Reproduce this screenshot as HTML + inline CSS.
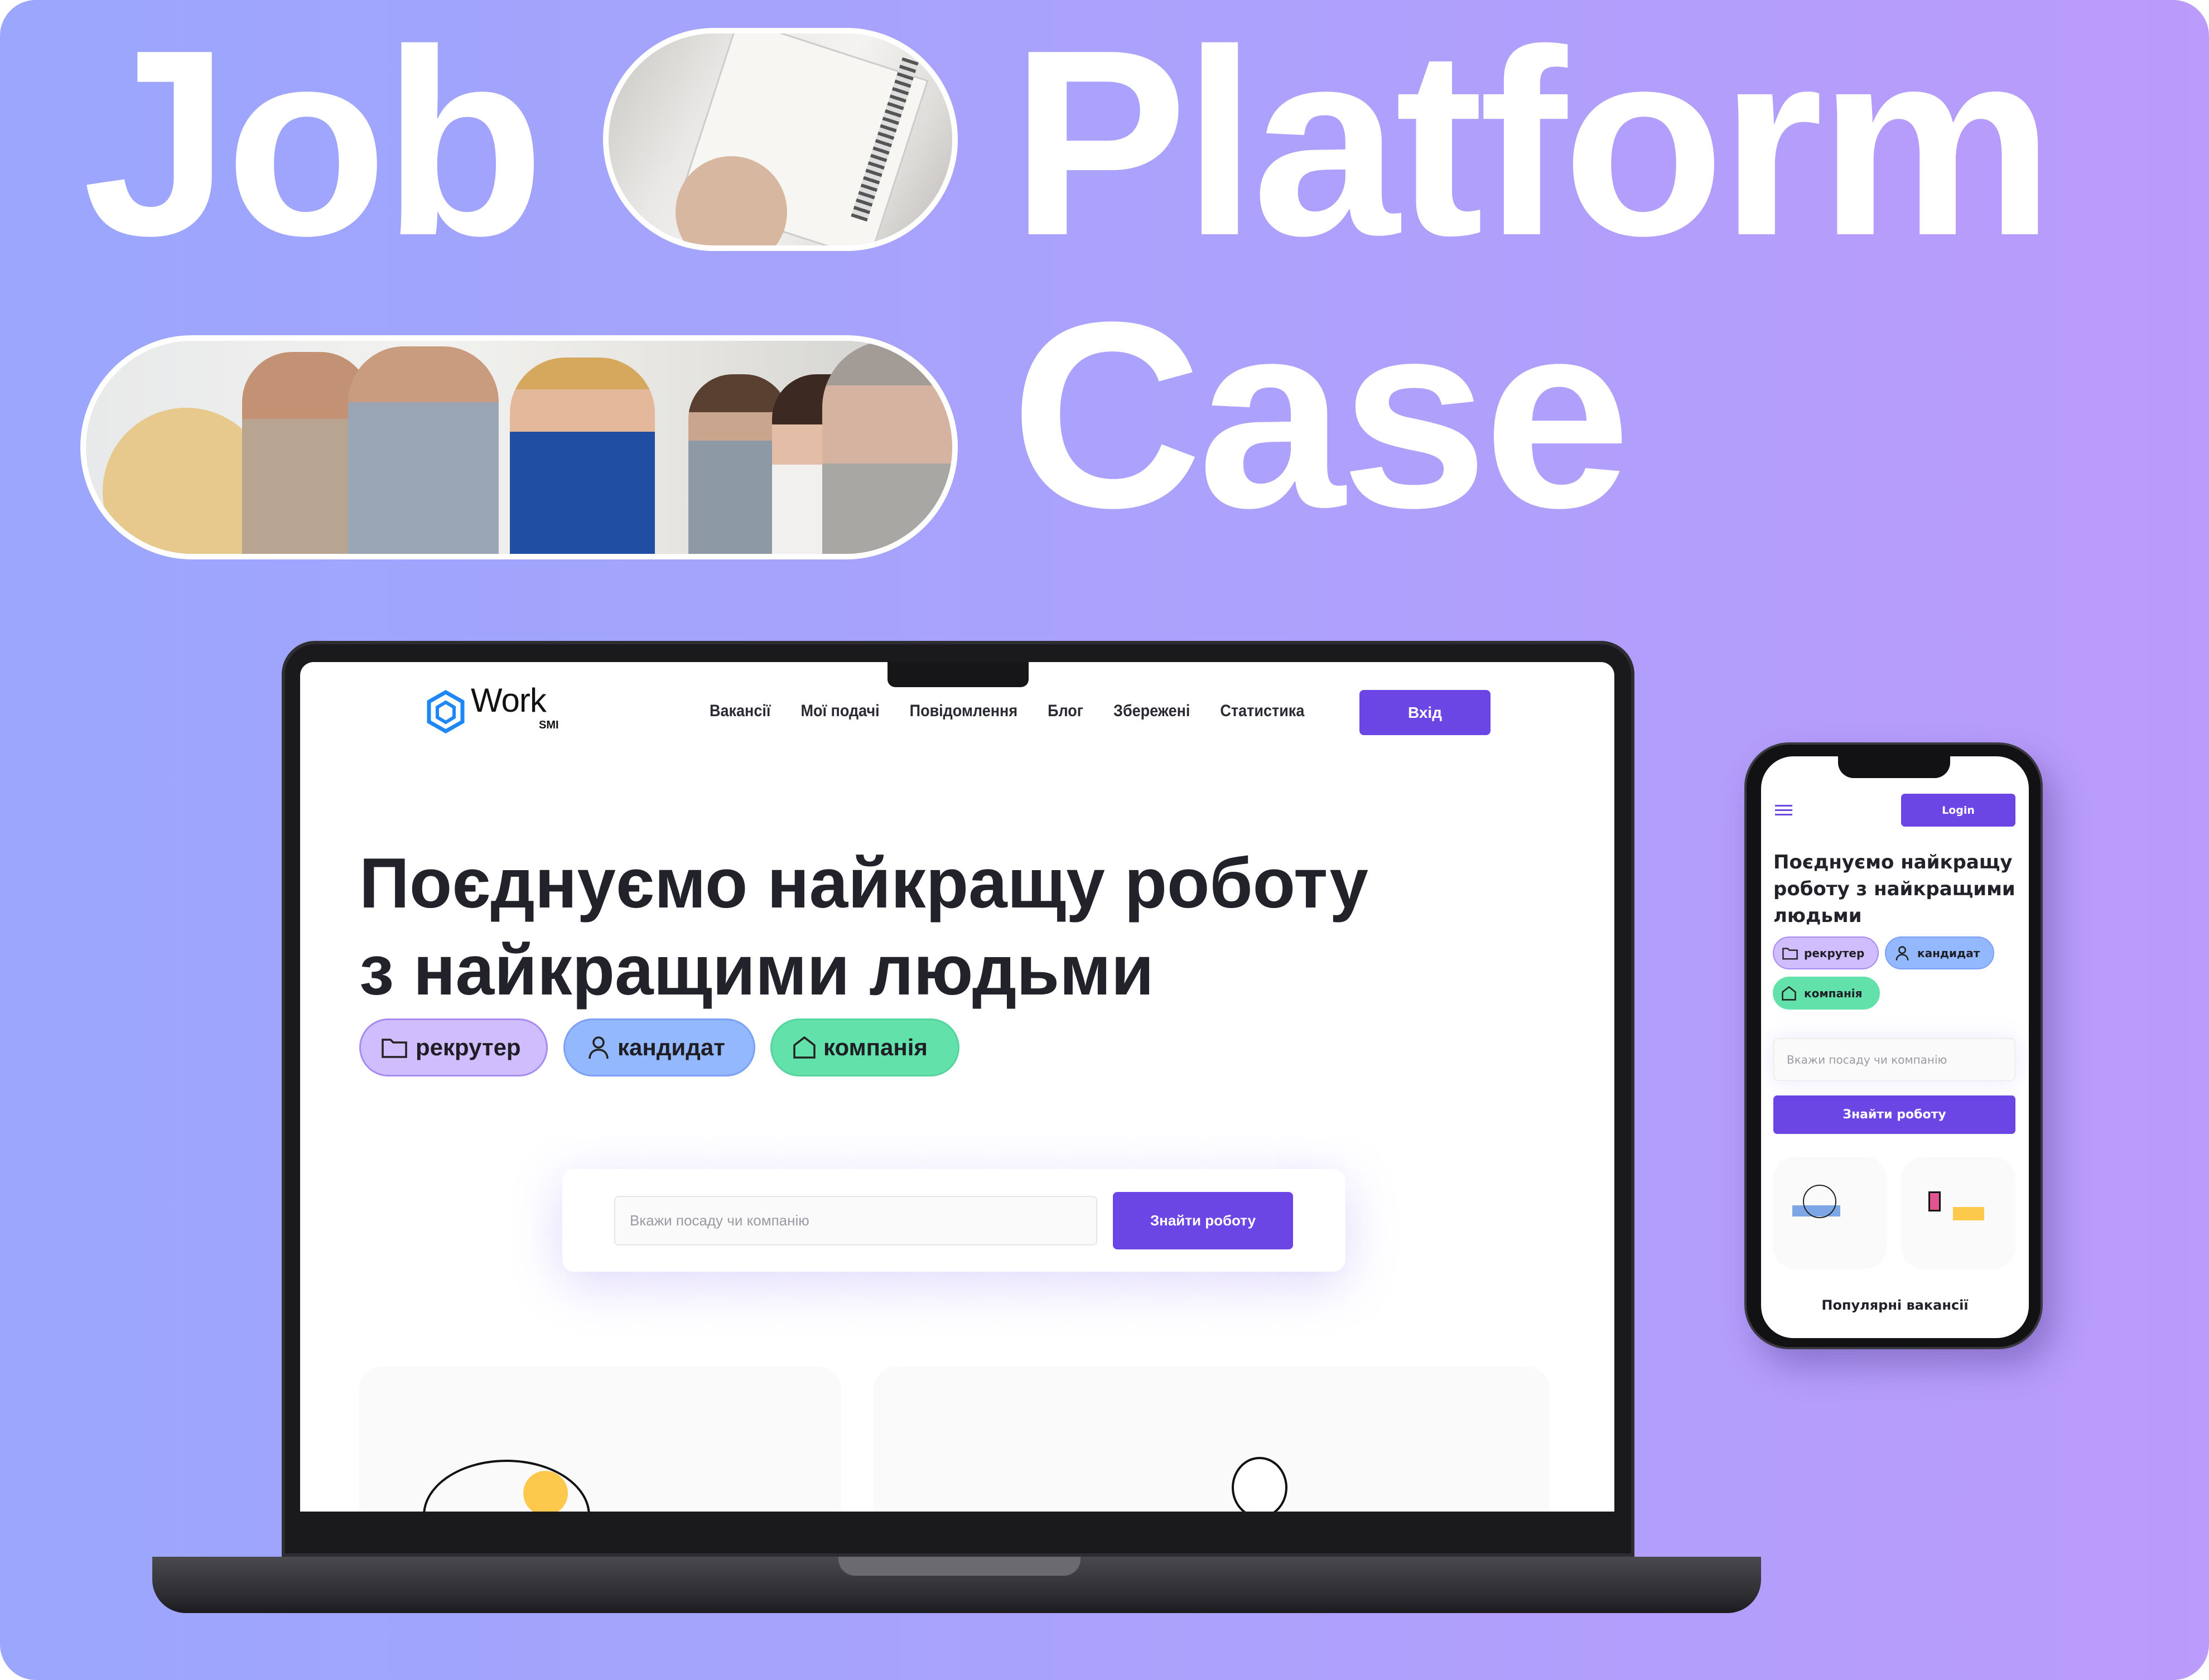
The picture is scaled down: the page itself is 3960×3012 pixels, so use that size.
<!DOCTYPE html>
<html><head><meta charset="utf-8"><style>
*{margin:0;padding:0;box-sizing:border-box}
body{width:3960px;height:3012px;overflow:hidden;background:#fff;font-family:"Liberation Sans","Noto Sans CJK SC",sans-serif}
#bg{position:absolute;left:0;top:0;width:3960px;height:3012px;border-radius:64px;background:linear-gradient(90deg,#9ba6fd 0%,#aaa2fc 50%,#bb9bfb 100%);overflow:hidden}
.abs{position:absolute}
.big{position:absolute;color:#fff;font-weight:bold;font-size:475px;line-height:1;letter-spacing:-8px}
.pill{position:absolute;border:10px solid #fff;border-radius:220px;overflow:hidden}
.chip{position:absolute;border-radius:60px;display:flex;align-items:center;font-weight:bold;color:#1e1e24}
</style></head><body><div id="bg">

<div class="big" style="left:148px;top:18px">Job</div>
<div class="big" style="left:1812px;top:18px">Platform</div>
<div class="big" style="left:1812px;top:506px">Case</div>

<div class="pill" style="left:1081px;top:50px;width:636px;height:400px;background:linear-gradient(120deg,#c9c7c3 0%,#e9e8e6 30%,#f4f3f1 55%,#dedcd9 80%,#bdbab6 100%)">
  <div class="abs" style="left:170px;top:20px;width:360px;height:340px;background:#f7f6f3;transform:rotate(18deg);border:3px solid #ccc"></div>
  <div class="abs" style="left:480px;top:40px;width:30px;height:300px;background:repeating-linear-gradient(0deg,#555 0 6px,#ddd 6px 14px);transform:rotate(18deg)"></div>
  <div class="abs" style="left:120px;top:220px;width:200px;height:200px;border-radius:50%;background:#d8b7a0"></div>
</div>

<div class="pill" style="left:144px;top:601px;width:1573px;height:402px;background:linear-gradient(90deg,#e8e9ea 0%,#f2f2f0 40%,#e5e4e0 70%,#cfcfcd 100%)">
  <div class="abs" style="left:30px;top:120px;width:300px;height:300px;border-radius:50%;background:#e7c98e"></div>
  <div class="abs" style="left:280px;top:20px;width:230px;height:400px;border-radius:90px 90px 0 0;background:linear-gradient(#c39275 0 30%,#b7a591 30%)"></div>
  <div class="abs" style="left:470px;top:10px;width:270px;height:400px;border-radius:100px 100px 0 0;background:linear-gradient(#c99c80 0 25%,#9aa6b5 25%)"></div>
  <div class="abs" style="left:760px;top:30px;width:260px;height:380px;border-radius:100px 100px 0 0;background:linear-gradient(#d6a85e 0 15%,#e4b99b 15% 35%,#1f4ea3 35%)"></div>
  <div class="abs" style="left:1080px;top:60px;width:180px;height:340px;border-radius:80px 80px 0 0;background:linear-gradient(#5a4030 0 20%,#caa58d 20% 35%,#8d9aa6 35%)"></div>
  <div class="abs" style="left:1230px;top:60px;width:200px;height:360px;border-radius:80px 80px 0 0;background:linear-gradient(#3c2a22 0 25%,#e3bda5 25% 45%,#f1f0ee 45%)"></div>
  <div class="abs" style="left:1320px;top:0px;width:260px;height:400px;border-radius:120px 0 0 0;background:linear-gradient(#a39b95 0 20%,#d6b3a0 20% 55%,#a9a7a4 55%)"></div>
</div>

<!-- Laptop -->
<div class="abs" style="left:273px;top:2791px;width:2884px;height:101px;border-radius:0 0 60px 60px;background:linear-gradient(#4a494d,#2d2c30 70%,#1c1b1e)"></div>
<div class="abs" style="left:1503px;top:2791px;width:434px;height:34px;border-radius:0 0 30px 30px;background:#6b6a6e"></div>
<div class="abs" style="left:505px;top:1149px;width:2425px;height:1642px;border-radius:60px 60px 0 0;background:#1a191c;border:6px solid #2e2d31"></div>
<div class="abs" style="left:538px;top:1187px;width:2356px;height:1523px;border-radius:24px 24px 0 0;background:#fff;overflow:hidden">
  <div class="abs" style="left:1053px;top:0;width:253px;height:45px;background:#161518;border-radius:0 0 14px 14px"></div>
  <svg class="abs" style="left:226px;top:50px" width="70" height="80" viewBox="0 0 70 80"><polygon points="35,4 65,21 65,57 35,74 5,57 5,21" fill="none" stroke="#1e86f5" stroke-width="7"/><polygon points="35,22 50,31 50,49 35,58 20,49 20,31" fill="none" stroke="#1e86f5" stroke-width="6"/></svg>
  <div class="abs" style="left:306px;top:34px;font-size:60px;color:#111;letter-spacing:-1px">Work</div>
  <div class="abs" style="left:428px;top:102px;font-size:20px;font-weight:bold;color:#111">SMI</div>
  <div class="abs" style="left:734px;top:71px;font-size:30px;font-weight:bold;color:#2a2a33;white-space:nowrap;transform:scaleX(0.9);transform-origin:left">
    <span>Вакансії</span><span style="margin-left:60px">Мої подачі</span><span style="margin-left:60px">Повідомлення</span><span style="margin-left:60px">Блог</span><span style="margin-left:60px">Збережені</span><span style="margin-left:60px">Статистика</span></div>
  <div class="abs" style="left:1899px;top:50px;width:235px;height:81px;border-radius:8px;background:#6c46e5;color:#fff;font-size:28px;font-weight:bold;display:flex;align-items:center;justify-content:center">Вхід</div>
  <div class="abs" style="left:106px;top:318px;font-size:127px;font-weight:bold;color:#22232a;line-height:156px;white-space:nowrap;transform:scaleX(0.985);transform-origin:left">Поєднуємо найкращу роботу<br>з найкращими людьми</div>
  <div class="chip" style="left:106px;top:639px;width:338px;height:104px;background:#cfbdfd;border:3px solid #a78af4;font-size:42px"><svg style="margin:0 14px 0 36px" width="48" height="40" viewBox="0 0 48 40"><path d="M3 6h14l5 5h23v26H3z" fill="none" stroke="#222" stroke-width="3.5"/></svg>рекрутер</div>
  <div class="chip" style="left:472px;top:639px;width:344px;height:104px;background:#94b8fd;border:3px solid #7ba0f6;font-size:42px"><svg style="margin:0 14px 0 40px" width="40" height="44" viewBox="0 0 40 44"><circle cx="20" cy="13" r="9" fill="none" stroke="#222" stroke-width="3.5"/><path d="M4 42c0-10 7-16 16-16s16 6 16 16" fill="none" stroke="#222" stroke-width="3.5"/></svg>кандидат</div>
  <div class="chip" style="left:843px;top:639px;width:339px;height:104px;background:#62e1ab;border:3px solid #55d49f;font-size:42px"><svg style="margin:0 12px 0 36px" width="44" height="44" viewBox="0 0 44 44"><path d="M4 40V18L22 4l18 14v22z" fill="none" stroke="#222" stroke-width="3.5"/></svg>компанія</div>
  <div class="abs" style="left:470px;top:909px;width:1404px;height:184px;border-radius:22px;background:#fff;box-shadow:0 20px 90px rgba(130,100,240,0.28)"></div>
  <div class="abs" style="left:563px;top:957px;width:866px;height:89px;border-radius:8px;background:#fafafa;border:2px solid #e6e6e6;font-size:26px;color:#9a9aa3;display:flex;align-items:center;padding-left:26px">Вкажи посаду чи компанію</div>
  <div class="abs" style="left:1457px;top:950px;width:323px;height:103px;border-radius:8px;background:#6c46e5;color:#fff;font-size:26px;font-weight:bold;display:flex;align-items:center;justify-content:center">Знайти роботу</div>
  <div class="abs" style="left:106px;top:1263px;width:864px;height:400px;border-radius:40px;background:#fafafa"></div>
  <div class="abs" style="left:1028px;top:1263px;width:1212px;height:400px;border-radius:40px;background:#fafafa"></div>
  <div class="abs" style="left:220px;top:1430px;width:300px;height:200px;border-radius:50%;border:4px solid #111"></div>
  <div class="abs" style="left:400px;top:1450px;width:80px;height:80px;border-radius:50%;background:#fcc94c"></div>
  <div class="abs" style="left:1670px;top:1425px;width:100px;height:110px;border-radius:50%;border:4px solid #111;background:#fff"></div>
</div>

<!-- Phone -->
<div class="abs" style="left:3127px;top:1331px;width:535px;height:1088px;border-radius:80px;background:#121114;box-shadow:20px 30px 60px rgba(60,40,120,0.35);border:4px solid #3a3940"></div>
<div class="abs" style="left:3157px;top:1356px;width:480px;height:1043px;border-radius:58px;background:#fff;overflow:hidden;font-family:'DejaVu Sans',sans-serif">
  <div class="abs" style="left:138px;top:0;width:201px;height:39px;background:#121114;border-radius:0 0 28px 28px"></div>
  <div class="abs" style="left:25px;top:87px;width:31px;height:3px;background:#6c46e5;box-shadow:0 8px 0 #6c46e5,0 16px 0 #6c46e5"></div>
  <div class="abs" style="left:251px;top:67px;width:205px;height:59px;border-radius:7px;background:#6c46e5;color:#fff;font-size:19px;font-weight:bold;display:flex;align-items:center;justify-content:center">Login</div>
  <div class="abs" style="left:22px;top:166px;font-size:34px;font-weight:bold;color:#22232a;line-height:48px;letter-spacing:0px;white-space:nowrap">Поєднуємо найкращу<br>роботу з найкращими<br>людьми</div>
  <div class="chip" style="left:21px;top:323px;width:190px;height:59px;background:#cfbdfd;border:2px solid #a78af4;font-size:20px;font-family:'DejaVu Sans'"><svg style="margin:0 10px 0 14px" width="30" height="24" viewBox="0 0 48 40"><path d="M3 6h14l5 5h23v26H3z" fill="none" stroke="#222" stroke-width="4"/></svg>рекрутер</div>
  <div class="chip" style="left:222px;top:323px;width:196px;height:59px;background:#94b8fd;border:2px solid #7ba0f6;font-size:20px;font-family:'DejaVu Sans'"><svg style="margin:0 14px 0 16px" width="26" height="28" viewBox="0 0 40 44"><circle cx="20" cy="13" r="9" fill="none" stroke="#222" stroke-width="4"/><path d="M4 42c0-10 7-16 16-16s16 6 16 16" fill="none" stroke="#222" stroke-width="4"/></svg>кандидат</div>
  <div class="chip" style="left:21px;top:395px;width:192px;height:59px;background:#62e1ab;font-size:20px;font-family:'DejaVu Sans'"><svg style="margin:0 12px 0 14px" width="30" height="28" viewBox="0 0 44 44"><path d="M4 40V18L22 4l18 14v22z" fill="none" stroke="#222" stroke-width="4"/></svg>компанія</div>
  <div class="abs" style="left:22px;top:505px;width:434px;height:77px;border-radius:8px;background:#fafafa;border:2px solid #eee;box-shadow:0 0 40px rgba(130,100,240,0.15);font-size:20px;color:#9a9aa3;display:flex;align-items:center;padding-left:22px">Вкажи посаду чи компанію</div>
  <div class="abs" style="left:22px;top:608px;width:434px;height:69px;border-radius:7px;background:#6c46e5;color:#fff;font-size:22px;font-weight:bold;display:flex;align-items:center;justify-content:center">Знайти роботу</div>
  <div class="abs" style="left:21px;top:718px;width:205px;height:201px;border-radius:40px;background:#fafafa"></div>
  <div class="abs" style="left:251px;top:718px;width:205px;height:201px;border-radius:40px;background:#fafafa"></div>
  <div class="abs" style="left:56px;top:805px;width:86px;height:20px;background:#7ca6e6"></div>
  <div class="abs" style="left:75px;top:768px;width:60px;height:60px;border-radius:50%;border:2px solid #222"></div>
  <div class="abs" style="left:344px;top:808px;width:56px;height:24px;background:#fcc94c"></div>
  <div class="abs" style="left:300px;top:780px;width:22px;height:36px;background:#e05590;border:3px solid #111"></div>
  <div class="abs" style="left:0;top:970px;width:480px;text-align:center;font-size:24px;font-weight:bold;color:#22232a">Популярні вакансії</div>
</div>

</div></body></html>
